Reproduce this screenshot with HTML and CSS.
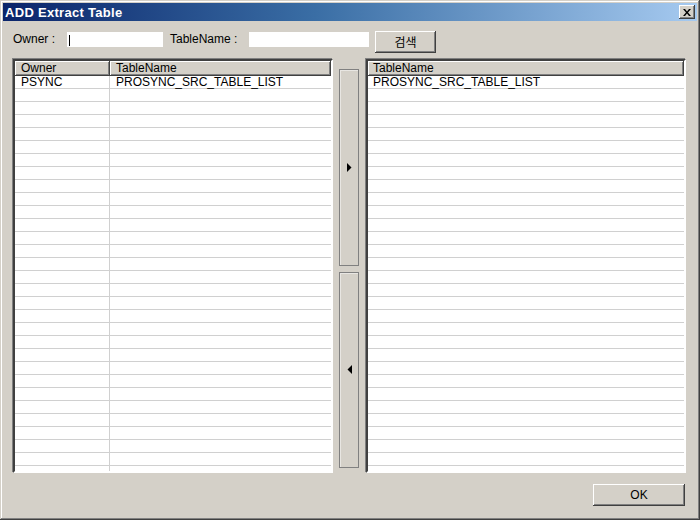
FILE: index.html
```html
<!DOCTYPE html>
<html>
<head>
<meta charset="utf-8">
<link rel="stylesheet" href="styles.css">
</head>
<body>
<div class="window">
  <div class="titlebar">
    <span class="title">ADD Extract Table</span>
    <button class="close" aria-label="Close">
      <svg width="8" height="7" viewBox="0 0 8 7"><path d="M0 0h2l2 2.5L6 0h2L5 3.5 8 7H6L4 4.5 2 7H0l3-3.5z" fill="#000"/></svg>
    </button>
  </div>
  <div class="content">
    <div class="form-row">
      <label class="lbl lbl-owner">Owner :</label>
      <div class="input input-owner"><span class="caret"></span></div>
      <label class="lbl lbl-table">TableName :</label>
      <div class="input input-table"></div>
      <button class="btn btn-search">검색</button>
    </div>
    <div class="lists">
      <div class="list list-left">
        <div class="header">
          <div class="hcell hcell-owner">Owner</div>
          <div class="hcell hcell-table">TableName</div>
        </div>
        <div class="body body-left">
          <div class="row">
            <span class="cell cell-owner">PSYNC</span>
            <span class="cell cell-table">PROSYNC_SRC_TABLE_LIST</span>
          </div>
        </div>
      </div>
      <div class="movers">
        <button class="mover" aria-label="Add">
          <svg width="5" height="9" viewBox="0 0 5 9"><path d="M0 0L4.5 4.5L0 9z" fill="#000"/></svg>
        </button>
        <button class="mover" aria-label="Remove">
          <svg width="5" height="9" viewBox="0 0 5 9"><path d="M5 0L0.5 4.5L5 9z" fill="#000"/></svg>
        </button>
      </div>
      <div class="list list-right">
        <div class="header">
          <div class="hcell hcell-full">TableName</div>
        </div>
        <div class="body body-right">
          <div class="row">
            <span class="cell cell-full">PROSYNC_SRC_TABLE_LIST</span>
          </div>
        </div>
      </div>
    </div>
    <div class="footer">
      <button class="btn btn-ok">OK</button>
    </div>
  </div>
</div>
</body>
</html>
```
FILE: styles.css
```css
html, body {
  margin: 0;
  padding: 0;
  background: #d4d0c8;
}
.window {
  width: 700px;
  height: 520px;
  box-sizing: border-box;
  padding: 3px;
  background: #d4d0c8;
  box-shadow: inset -1px -1px #404040, inset 1px 1px #d4d0c8, inset -2px -2px #808080, inset 2px 2px #ffffff;
  display: flex;
  flex-direction: column;
  font-family: "Liberation Sans", Arial, "Noto Sans CJK KR", sans-serif;
  font-size: 12px;
  color: #000;
}
.titlebar {
  height: 18px;
  flex: none;
  background: linear-gradient(to right, #0a246a 0%, #3a6ea5 45%, #a6caf0 100%);
  display: flex;
  align-items: center;
  justify-content: space-between;
  padding: 0 2px 0 2px;
}
.title {
  color: #fff;
  font-weight: bold;
  font-size: 13px;
  letter-spacing: 0.3px;
}
.close {
  width: 16px;
  height: 14px;
  padding: 0;
  border: none;
  background: #d4d0c8;
  box-shadow: inset -1px -1px #404040, inset 1px 1px #ffffff, inset -2px -2px #808080;
  display: flex;
  align-items: center;
  justify-content: center;
}
.content {
  flex: 1;
  display: flex;
  flex-direction: column;
  padding: 10px 11px 0 10px;
}
.form-row {
  height: 22px;
  display: flex;
  align-items: flex-start;
}
.lbl {
  white-space: nowrap;
  margin-top: 1px;
  line-height: 14px;
}
.lbl-owner {
  width: 54px;
}
.lbl-table {
  margin-left: 7px;
  width: 79px;
}
.input {
  height: 15px;
  background: #fff;
  position: relative;
  margin-top: 1px;
}
.input-owner {
  width: 96px;
}
.input-table {
  width: 120px;
}
.caret {
  position: absolute;
  left: 2px;
  top: 3px;
  width: 1px;
  height: 11px;
  background: #000;
}
.btn {
  font-family: "Noto Sans CJK KR", "Liberation Sans", sans-serif;
  font-size: 12px;
  border: none;
  padding: 0;
  background: #d4d0c8;
  color: #000;
  box-shadow: inset -1px -1px #404040, inset 1px 1px #ffffff, inset -2px -2px #808080;
}
.btn-search {
  width: 61px;
  height: 22px;
  margin-left: 6px;
  line-height: 20px;
}
.lists {
  margin-top: 6px;
  height: 414px;
  display: flex;
}
.list {
  width: 320px;
  box-sizing: border-box;
  border-style: solid;
  border-width: 2px;
  border-color: #404040 #ffffff #ffffff #404040;
  box-shadow: -1px -1px #808080;
  background: #fff;
  display: flex;
  flex-direction: column;
  overflow: hidden;
}
.header {
  height: 15px;
  display: flex;
  flex: none;
  background: #d4d0c8;
}
.hcell {
  box-sizing: border-box;
  height: 15px;
  line-height: 15px;
  padding-left: 6px;
  background: #d4d0c8;
  box-shadow: inset -1px -1px #404040, inset 1px 1px #ffffff, inset -2px -2px #808080;
  white-space: nowrap;
}
.hcell-owner {
  width: 95px;
}
.hcell-table {
  flex: 1;
}
.hcell-full {
  flex: 1;
  padding-left: 5px;
}
.body {
  flex: 1;
  background-color: #fff;
  background-image: repeating-linear-gradient(to bottom, transparent 0 13px, #d0d0d0 13px 14px);
  background-size: 100% 13px;
  background-image: linear-gradient(to bottom, transparent 12px, #d0d0d0 12px);
}
.body-left {
  background-image:
    linear-gradient(to right, transparent 94px, #d0d0d0 94px 95px, transparent 95px),
    linear-gradient(to bottom, transparent 12px, #d0d0d0 12px);
  background-size: 100% 100%, 100% 13px;
}
.row {
  height: 13px;
  display: flex;
  line-height: 13px;
  white-space: nowrap;
}
.cell-owner {
  width: 95px;
  padding-left: 6px;
  box-sizing: border-box;
}
.cell-table {
  padding-left: 6px;
}
.cell-full {
  padding-left: 5px;
}
.movers {
  width: 20px;
  margin: 0 7px 0 6px;
  padding: 10px 0 5px;
  display: flex;
  flex-direction: column;
  gap: 6px;
}
.mover {
  flex: 1;
  padding: 0;
  border: 1px solid #808080;
  background: #d4d0c8;
  box-shadow: inset 1px 1px #e8e6e2;
  display: flex;
  align-items: center;
  justify-content: center;
}
.footer {
  margin-top: 11px;
  display: flex;
  justify-content: flex-end;
}
.btn-ok {
  width: 92px;
  height: 22px;
  margin-right: 1px;
  font-family: "Liberation Sans", Arial, sans-serif;
  line-height: 20px;
}
```
